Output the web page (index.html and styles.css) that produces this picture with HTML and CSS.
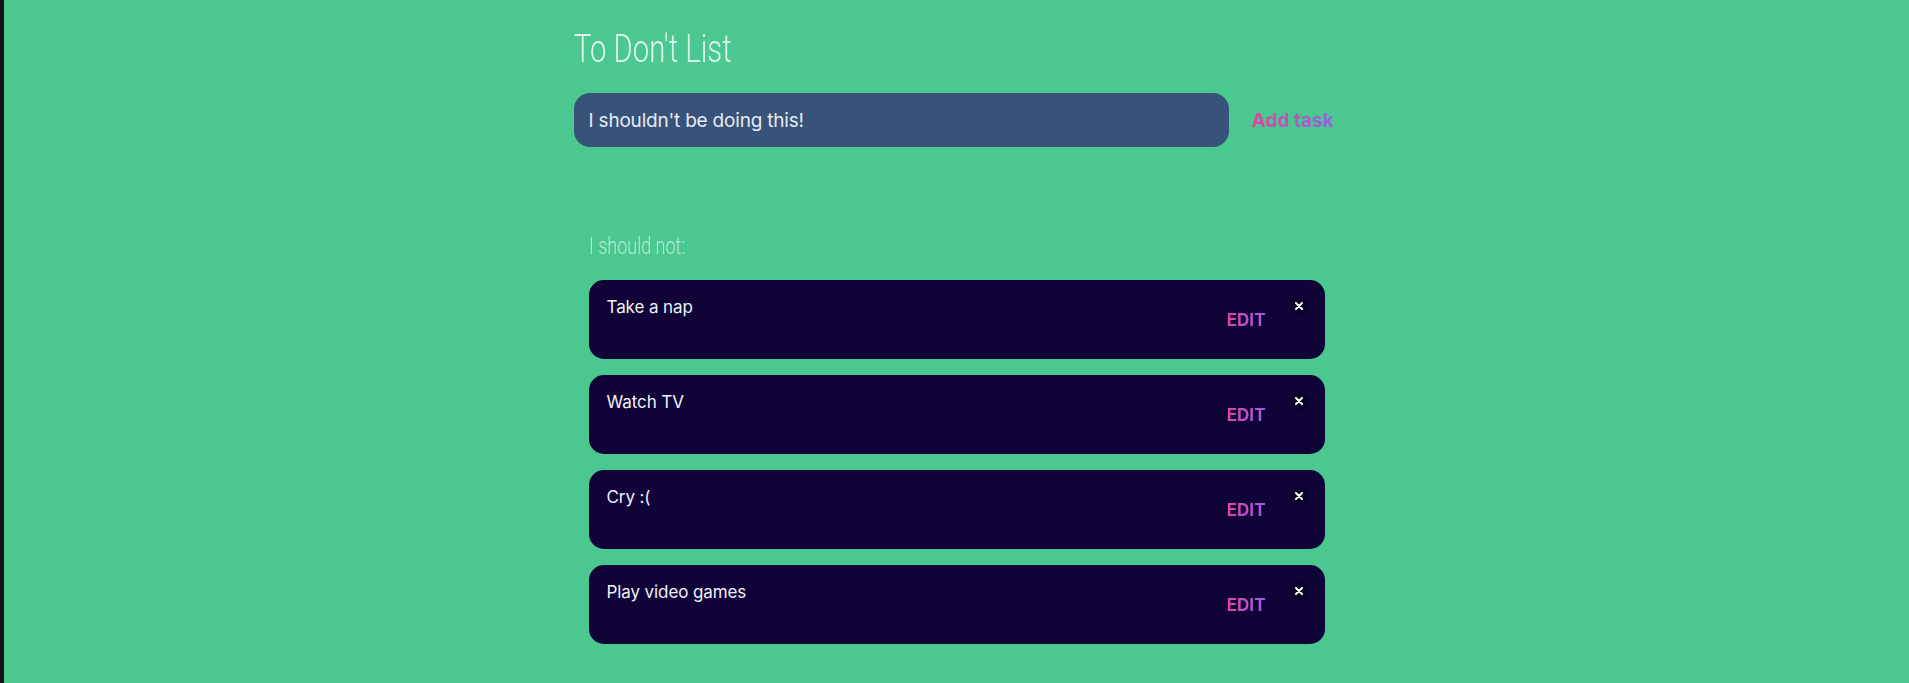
FILE: index.html
```html
<!DOCTYPE html>
<html lang="en">
<head>
<meta charset="utf-8">
<title>To Don't List</title>
<link rel="stylesheet" href="styles.css">
</head>
<body>
<div class="strip"></div>
<main class="main">
  <div class="wrap">
    <h1 class="title"><span class="cond">To Don't List</span></h1>
    <form class="add-row">
      <div class="input">I shouldn't be doing this!</div>
      <button type="button" class="add-btn"><span class="grad">Add task</span></button>
    </form>
    <section class="list">
      <h2 class="subtitle"><span class="cond">I should not:</span></h2>
      <ul class="cards">
        <li class="card">
          <span class="card-text">Take a nap</span>
          <button type="button" class="edit"><span class="grad">EDIT</span></button>
          <button type="button" class="close"><svg width="8" height="8" viewBox="0 0 8 8"><path d="M1 1L7 7M7 1L1 7" stroke="#fff" stroke-width="2" stroke-linecap="round"/></svg></button>
        </li>
        <li class="card">
          <span class="card-text">Watch TV</span>
          <button type="button" class="edit"><span class="grad">EDIT</span></button>
          <button type="button" class="close"><svg width="8" height="8" viewBox="0 0 8 8"><path d="M1 1L7 7M7 1L1 7" stroke="#fff" stroke-width="2" stroke-linecap="round"/></svg></button>
        </li>
        <li class="card">
          <span class="card-text">Cry :(</span>
          <button type="button" class="edit"><span class="grad">EDIT</span></button>
          <button type="button" class="close"><svg width="8" height="8" viewBox="0 0 8 8"><path d="M1 1L7 7M7 1L1 7" stroke="#fff" stroke-width="2" stroke-linecap="round"/></svg></button>
        </li>
        <li class="card">
          <span class="card-text">Play video games</span>
          <button type="button" class="edit"><span class="grad">EDIT</span></button>
          <button type="button" class="close"><svg width="8" height="8" viewBox="0 0 8 8"><path d="M1 1L7 7M7 1L1 7" stroke="#fff" stroke-width="2" stroke-linecap="round"/></svg></button>
        </li>
      </ul>
    </section>
  </div>
</main>
</body>
</html>
```
FILE: styles.css
```css
* { box-sizing: border-box; }
html, body { margin: 0; padding: 0; height: 100%; }
body {
  display: flex;
  background: #4ac88f;
  font-family: Inter, "Noto Sans", sans-serif;
  overflow: hidden;
}
.strip {
  width: 4px;
  flex: 0 0 4px;
  background: #131313;
}
.main {
  flex: 1;
  display: flex;
  justify-content: center;
}
.wrap {
  width: 766px;
  padding-top: 26px;
}
.title {
  margin: 0;
  font-family: Roboto, sans-serif;
  font-weight: 300;
  font-size: 38px;
  line-height: 46px;
  color: rgba(255, 255, 255, 0.82);
}
.cond {
  display: inline-block;
  transform: scaleX(0.77);
  transform-origin: left center;
  white-space: nowrap;
}
.add-row {
  margin: 21px 0 0;
  display: flex;
  align-items: center;
  gap: 23px;
}
.input {
  width: 655px;
  height: 54px;
  border-radius: 16px;
  background: #38537a;
  color: #e6eaf1;
  font-size: 19px;
  letter-spacing: -0.2px;
  display: flex;
  align-items: center;
  padding-left: 15px;
}
.add-btn {
  border: 0;
  background: none;
  padding: 0;
  font-family: Inter, sans-serif;
  font-weight: 700;
  font-size: 19px;
  cursor: pointer;
}
.grad {
  background: linear-gradient(90deg, #e2459e, #985ee9);
  -webkit-background-clip: text;
  background-clip: text;
  color: transparent;
}
.list {
  padding-left: 15px;
}
.subtitle {
  margin: 85px 0 0;
  font-family: Roboto, sans-serif;
  font-weight: 300;
  font-size: 24px;
  line-height: 28px;
  color: rgba(255, 255, 255, 0.6);
}
.subtitle .cond {
  transform: scaleX(0.75);
}
.cards {
  list-style: none;
  margin: 20px 0 0;
  padding: 0;
  display: flex;
  flex-direction: column;
  gap: 16px;
  width: 736px;
}
.card {
  min-height: 79px;
  background: #0f0338;
  border-radius: 15px;
  padding: 16px 17px 16px 18px;
  display: flex;
  align-items: center;
}
.card-text {
  flex: 1;
  align-self: flex-start;
  color: #f1f0f6;
  font-size: 17px;
  letter-spacing: -0.1px;
  line-height: 22px;
}
.edit {
  border: 0;
  background: none;
  padding: 0;
  font-family: Inter, sans-serif;
  font-weight: 700;
  font-size: 17px;
  line-height: 20px;
  cursor: pointer;
}
.close {
  align-self: flex-start;
  margin: 1px 0 0 24px;
  width: 18px;
  height: 18px;
  border-radius: 50%;
  border: 0;
  padding: 0;
  background: #0a0226;
  display: flex;
  align-items: center;
  justify-content: center;
  cursor: pointer;
}
```
